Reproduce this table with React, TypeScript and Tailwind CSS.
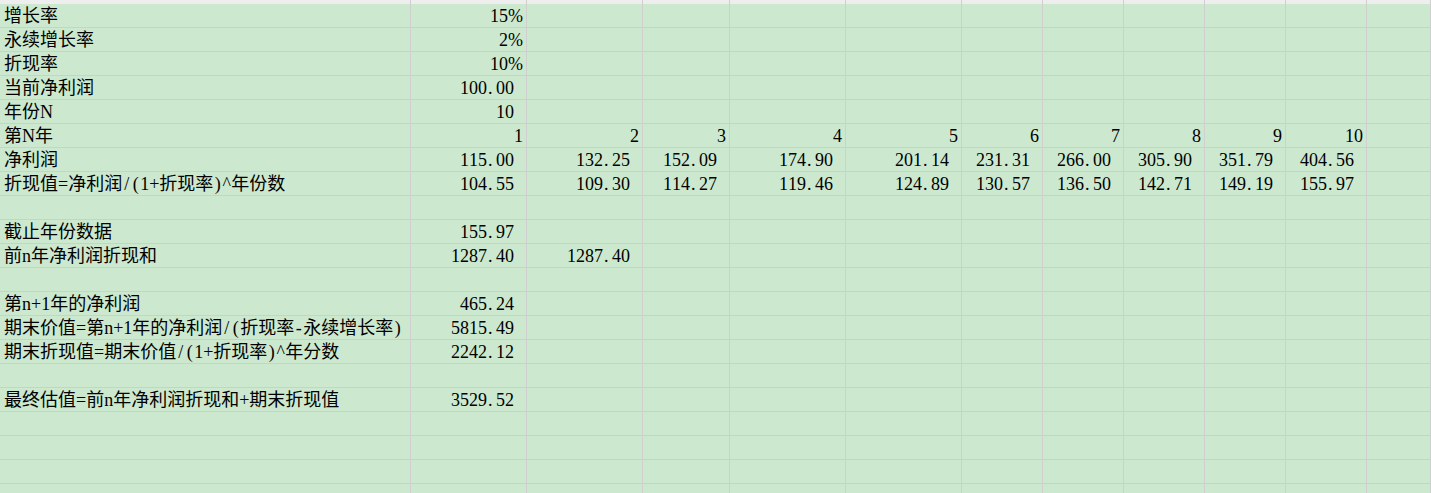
type Cell = { v: string; pad?: 'n' | 'i' };

const cols =
  'grid grid-cols-[411px_116px_116px_87px_116px_116px_81px_81px_81px_81px_81px_1fr]';

const years = ['1', '2', '3', '4', '5', '6', '7', '8', '9', '10'];
const profit = ['115.00', '132.25', '152.09', '174.90', '201.14', '231.31', '266.00', '305.90', '351.79', '404.56'];
const discounted = ['104.55', '109.30', '114.27', '119.46', '124.89', '130.57', '136.50', '142.71', '149.19', '155.97'];

const rows: { label: string; cells: Cell[] }[] = [
  { label: '增长率', cells: [{ v: '15%', pad: 'i' }] },
  { label: '永续增长率', cells: [{ v: '2%', pad: 'i' }] },
  { label: '折现率', cells: [{ v: '10%', pad: 'i' }] },
  { label: '当前净利润', cells: [{ v: '100.00' }] },
  { label: '年份N', cells: [{ v: '10' }] },
  { label: '第N年', cells: years.map((v) => ({ v, pad: 'i' as const })) },
  { label: '净利润', cells: profit.map((v) => ({ v })) },
  { label: '折现值=净利润/(1+折现率)^年份数', cells: discounted.map((v) => ({ v })) },
  { label: '', cells: [] },
  { label: '截止年份数据', cells: [{ v: '155.97' }] },
  { label: '前n年净利润折现和', cells: [{ v: '1287.40' }, { v: '1287.40' }] },
  { label: '', cells: [] },
  { label: '第n+1年的净利润', cells: [{ v: '465.24' }] },
  { label: '期末价值=第n+1年的净利润/(折现率-永续增长率)', cells: [{ v: '5815.49' }] },
  { label: '期末折现值=期末价值/(1+折现率)^年分数', cells: [{ v: '2242.12' }] },
  { label: '', cells: [] },
  { label: '最终估值=前n年净利润折现和+期末折现值', cells: [{ v: '3529.52' }] },
  { label: '', cells: [] },
  { label: '', cells: [] },
  { label: '', cells: [] },
  { label: '', cells: [] },
];

// Song-style fonts give every ASCII glyph a half-width cell; mimic that
function HalfWidth({ text }: { text: string }) {
  return (
    <>
      {Array.from(text).map((ch, i) =>
        ch.charCodeAt(0) < 128 ? (
          <span
            key={i}
            className={`inline-block min-w-[9px] ${ch === '.' ? 'text-left pl-[1px]' : 'text-center'}`}
          >
            {ch}
          </span>
        ) : (
          <span key={i}>{ch}</span>
        ),
      )}
    </>
  );
}

export default function App() {
  return (
    <div
      className="w-[1431px] h-[493px] overflow-hidden bg-[#cce8cf] text-black text-[18px]"
      style={{ fontFamily: '"Liberation Serif", "Noto Sans CJK SC", serif' }}
    >
      {/* header strip */}
      <div className={`${cols} h-[4px] bg-[#eeeeee]`}>
        {Array.from({ length: 12 }).map((_, i) => (
          <div key={i} className="border-r border-[#cfcfcf]" />
        ))}
      </div>

      {rows.map((row, r) => (
        <div key={r} className={`${cols} h-[24px] border-b border-[#d3cbd3]`}>
          <div className="border-r border-[#cfcfcf] pl-[4px] pt-[1px] leading-[22px] whitespace-nowrap overflow-hidden">
            <HalfWidth text={row.label} />
          </div>
          {Array.from({ length: 11 }).map((_, c) => {
            const cell = row.cells[c];
            return (
              <div
                key={c}
                className={`border-r border-[#cfcfcf] pt-[1px] leading-[22px] text-right whitespace-nowrap ${
                  cell?.pad === 'i' ? 'pr-[3px]' : 'pr-[12px]'
                }`}
              >
                {cell ? <HalfWidth text={cell.v} /> : null}
              </div>
            );
          })}
        </div>
      ))}
    </div>
  );
}
